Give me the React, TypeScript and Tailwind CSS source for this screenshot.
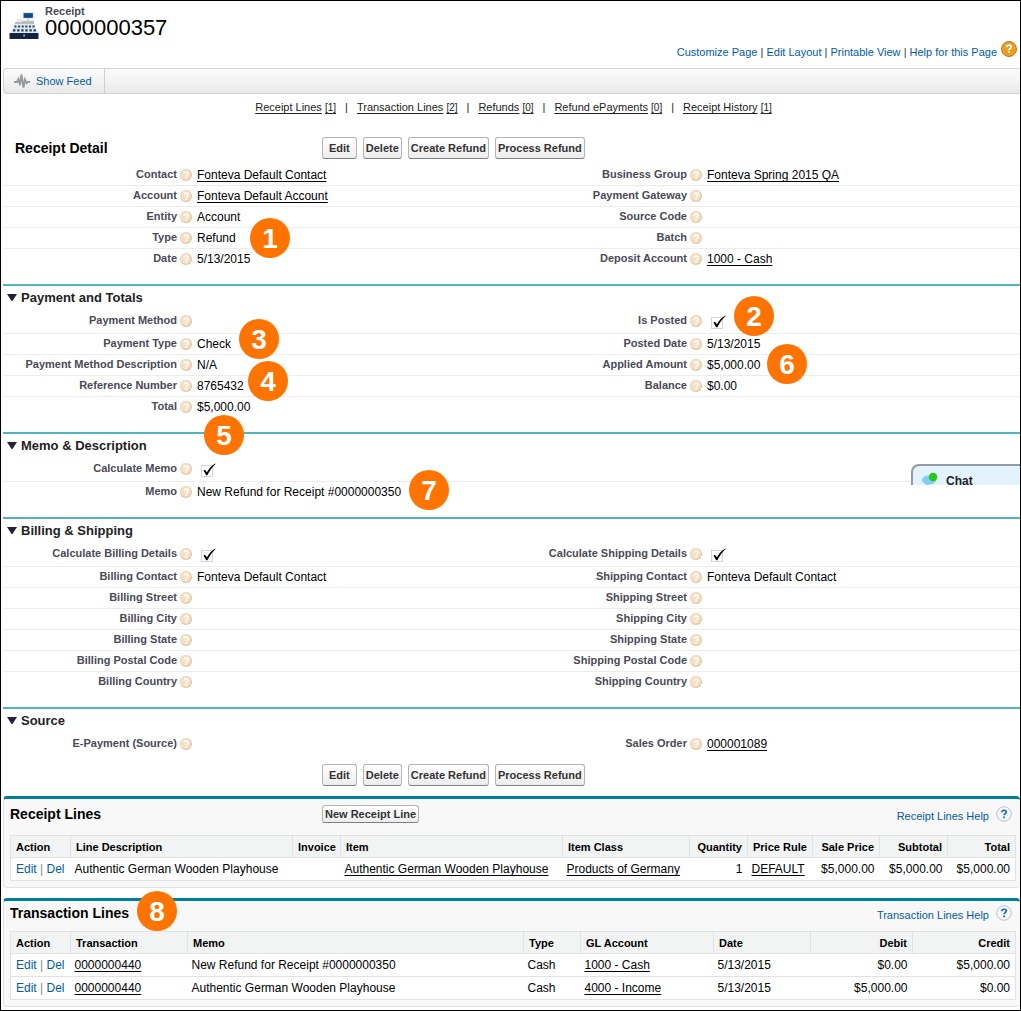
import type { ReactNode } from "react";

const ACTIONS = ["Edit", "Delete", "Create Refund", "Process Refund"];

function A({ children }: { children: ReactNode }) {
  return (
    <a href="#" className="underline underline-offset-2">
      {children}
    </a>
  );
}

function Btn({ children, small }: { children: ReactNode; small?: boolean }) {
  return (
    <button
      type="button"
      className={
        "whitespace-nowrap rounded-[3px] border border-[#b5b5b5] border-b-[#7f7f7f] bg-linear-to-b from-white to-[#ededed] px-[2px] text-[11px] font-bold text-[#333] " +
        (small ? "h-[18px] leading-4" : "h-[22px] leading-5")
      }
    >
      {children}
    </button>
  );
}

function ActionBar() {
  return (
    <div className="flex gap-[6px]">
      {ACTIONS.map((a) => (
        <div key={a} className="flex first:*:px-[6px]">
          <Btn>{a}</Btn>
        </div>
      ))}
    </div>
  );
}

function Hint() {
  return (
    <svg viewBox="0 0 12 12" className="mx-[3px] mt-1 h-3 w-3 shrink-0" aria-hidden="true">
      <circle cx="6" cy="6" r="6" fill="#e2c4a0" />
      <circle cx="5.6" cy="5.4" r="5.3" fill="#f5dfc4" />
      <path d="M4.200 4.800c0-2.300 3.800-2.200 3.800-.1 0 1.300-1.900 1.300-1.900 2.700M6.100 8.300v1.400" fill="none" stroke="#fff" strokeWidth="1.500" />
    </svg>
  );
}

function Check() {
  return (
    <svg viewBox="0 0 16 14" className="mt-1 ml-1 h-[14px] w-4" role="img" aria-label="Checked">
      <rect x=".5" y="2.5" width="11" height="11" fill="#fff" stroke="#aaa" strokeDasharray="1 1" />
      <path d="M2.500 7.600l1.400-.9 2 2.600C8 5.800 10.600 2.600 14.200.6l.3.5C11.300 4.400 8.800 7.600 6.300 12.200H5.200z" fill="#000" />
    </svg>
  );
}

const BADGE =
  "absolute z-10 flex h-10 w-10 items-center justify-center rounded-full bg-[#ff7300] pt-px font-['Liberation_Sans',Arial,sans-serif] text-[28px] leading-10 font-bold text-white";

function Field({ label, children, tall, first }: { label?: string; children?: ReactNode; tall?: boolean; first?: boolean }) {
  return (
    <div className={"flex items-start border-t " + (tall ? "h-[23px] " : "h-[21px] ") + (first ? "border-transparent" : "border-[#ececec]")}>
      {label && (
        <>
          <div className="w-[174px] shrink-0 text-right text-[11px] leading-[19px] font-bold whitespace-nowrap text-[#4a4a56]">{label}</div>
          <Hint />
          <div className="relative ml-[2px] leading-5 whitespace-nowrap">{children}</div>
        </>
      )}
    </div>
  );
}

function Cols({ left, right }: { left: ReactNode; right: ReactNode }) {
  return (
    <div className="grid grid-cols-[510fr_507fr]">
      <div>{left}</div>
      <div>{right}</div>
    </div>
  );
}

function Section({ title, children }: { title: string; children: ReactNode }) {
  return (
    <section className="mt-[15px] border-t-2 border-[#51b5bf]">
      <h3 className="flex h-6 items-center pl-1 text-[13px] font-bold text-[#222]">
        <svg viewBox="0 0 10 8" className="mr-1 mb-[2px] h-2 w-[10px]" aria-hidden="true">
          <path d="M0 1h10L5.500 8h-1z" fill="#23233a" />
        </svg>
        {title}
      </h3>
      {children}
    </section>
  );
}

function Related({ title, help, button, badge, tall, children }: { title: string; help: string; button?: string; badge?: ReactNode; tall?: boolean; children: ReactNode }) {
  return (
    <section className="rounded-[4px] border border-t-[3px] border-r-0 border-[#e0e3e5] border-t-[#007f99] bg-[#f8f8f8] pr-1 pb-[6px] pl-[6px]">
      <div className={"relative flex items-start " + (tall ? "h-9" : "h-[30px]")}>
        <h3 className={"w-[312px] text-sm font-bold " + (tall ? "leading-[31px]" : "leading-6")}>{title}</h3>
        {badge}
        {button && (
          <div className="mt-[6px] flex">
            <Btn small>{button}</Btn>
          </div>
        )}
        <div className={"ml-auto flex items-start pr-1 " + (tall ? "pt-[7px]" : "pt-1")}>
          <a href="#" className="mt-[2px] text-[11px] leading-4 text-[#015ba7]">
            {help}
          </a>
          <svg viewBox="0 0 16 16" className="ml-[7px] h-4 w-4" aria-hidden="true">
            <circle cx="8" cy="8" r="7.300" fill="#f4f6f7" stroke="#bfc3c6" />
            <path d="M5.900 6.300c0-2.800 4.300-2.600 4.300-.2 0 1.500-2.100 1.600-2.100 3.200M8.100 10.500v1.700" fill="none" stroke="#1668b8" strokeWidth="1.700" />
          </svg>
        </div>
      </div>
      {children}
    </section>
  );
}

type Col = { name: string; w: string; right?: boolean };

function Grid({ cols, rows }: { cols: Col[]; rows: ReactNode[][] }) {
  return (
    <table className="w-full table-fixed border-collapse border border-[#e0e3e5] bg-white text-left">
      <thead>
        <tr className="h-[22px] bg-[#f2f3f3] text-[11px]">
          {cols.map((c) => (
            <th key={c.name} className={"border border-[#e0e3e5] px-[5px] pt-[2px] pb-0 font-bold whitespace-nowrap " + c.w + (c.right ? " text-right" : "")}>
              {c.name}
            </th>
          ))}
        </tr>
      </thead>
      <tbody>
        {rows.map((r, i) => (
          <tr key={i} className="h-[23px] border-b border-[#e0e3e5]">
            {r.map((cell, j) => (
              <td key={j} className={"py-0 pr-[5px] pl-1 whitespace-nowrap" + (cols[j].right ? " text-right" : "")}>
                {cell}
              </td>
            ))}
          </tr>
        ))}
      </tbody>
    </table>
  );
}

const editDel = (
  <span className="pl-px text-[#015ba7]">
    <a href="#">Edit</a> <span className="text-[#888]">|</span> <a href="#">Del</a>
  </span>
);

const receiptCols: Col[] = [
  { name: "Action", w: "w-[60px]" },
  { name: "Line Description", w: "" },
  { name: "Invoice", w: "w-[48px]" },
  { name: "Item", w: "w-[222px]" },
  { name: "Item Class", w: "w-[127px]" },
  { name: "Quantity", w: "w-[58px]", right: true },
  { name: "Price Rule", w: "w-[65px]" },
  { name: "Sale Price", w: "w-[67px]", right: true },
  { name: "Subtotal", w: "w-[68px]", right: true },
  { name: "Total", w: "w-[68px]", right: true },
];

const transactionCols: Col[] = [
  { name: "Action", w: "w-[60px]" },
  { name: "Transaction", w: "w-[117px]" },
  { name: "Memo", w: "" },
  { name: "Type", w: "w-[57px]" },
  { name: "GL Account", w: "w-[133px]" },
  { name: "Date", w: "w-[97px]" },
  { name: "Debit", w: "w-[102px]", right: true },
  { name: "Credit", w: "w-[103px]", right: true },
];

const lists: [string, number][] = [
  ["Receipt Lines", 1],
  ["Transaction Lines", 2],
  ["Refunds", 0],
  ["Refund ePayments", 0],
  ["Receipt History", 1],
];

export default function App() {
  return (
    <div className="border border-black bg-white pb-[3px] pl-[2px] font-['Liberation_Sans',Arial,sans-serif] text-xs text-black">
      <header className="flex h-[67px] items-start justify-between">
        <div className="flex items-start pl-[6px]">
          <svg viewBox="0 0 30 28" className="mt-[11px] h-7 w-[30px]" aria-hidden="true">
            <rect x="14.500" y="1" width="9.500" height="5" fill="#0b4a86" stroke="#8fa9c4" strokeWidth=".5" />
            <path d="M18.500 6h1.500v3h-1.500z" fill="#c9ced2" />
            <path d="M7.500 7h6v4h-6z" fill="#e6e8ea" />
            <path d="M6 10h7V8.700h12V12H6z" fill="#b9bdc2" />
            <path d="M5 12h20.500L29 21H1z" fill="#e3e8ed" />
            <path d="M5.500 14.500h20" stroke="#21456f" strokeWidth="2" strokeDasharray="2 1.600" />
            <path d="M4 18.300h23" stroke="#21456f" strokeWidth="2.200" strokeDasharray="2.400 1.700" />
            <path d="M.500 21h29v5.500q0 .5-.5.5H1q-.5 0-.5-.5z" fill="#12233f" />
            <rect x="14.500" y="22.500" width="1.200" height="2" fill="#d8dfe8" />
          </svg>
          <div className="pl-[6px]">
            <p className="mt-1 text-[11px] leading-3 font-bold text-[#4a4a56]">Receipt</p>
            <h1 className="text-[22px] leading-[22px]">0000000357</h1>
          </div>
        </div>
        <nav className="mt-10 flex items-start pr-[3px] text-[11px] whitespace-nowrap text-[#015ba7]">
          <div className="mt-[3px] leading-4">
            <a href="#">Customize Page</a> <span className="text-[#333]">|</span> <a href="#">Edit Layout</a> <span className="text-[#333]">|</span>{" "}
            <a href="#">Printable View</a> <span className="text-[#333]">|</span> <a href="#">Help for this Page</a>
          </div>
          <svg viewBox="0 0 16 16" className="ml-1 h-4 w-4" aria-hidden="true">
            <circle cx="8" cy="8" r="7.500" fill="#ee9d20" stroke="#b97a1c" />
            <path d="M5.700 6.200c0-2.800 4.500-2.600 4.500-.2 0 1.500-2.200 1.600-2.200 3.200M8 10.300v1.800" fill="none" stroke="#fff" strokeWidth="1.700" />
          </svg>
        </nav>
      </header>

      <div className="flex h-[26px] rounded-l-[4px] border border-r-0 border-[#d4d4d4] bg-linear-to-b from-[#fcfcfc] to-[#e9e9e9]">
        <a href="#" className="flex items-center border-r border-[#cfcfcf] pr-3 pl-[10px] text-[11px] text-[#015ba7]">
          <svg viewBox="0 0 16 16" className="mr-[6px] h-4 w-4" aria-hidden="true">
            <path d="M0 9h3l1.500-3L6 12 7.500 1.500l2 13L11 6.500l1.500 3.500 1-1H16" fill="none" stroke="#969a9e" strokeWidth="1.900" />
          </svg>
          Show Feed
        </a>
      </div>

      <nav className="flex h-[43px] items-start justify-center pt-[5px] pl-1 text-[11px] leading-4 whitespace-nowrap text-[#222]">
        {lists.map(([name, n], i) => (
          <span key={name}>
            {i > 0 && <span className="mx-[9px]">|</span>}
            <A>{name}</A>{" "}
            <a href="#" className="text-[10px] underline underline-offset-2">
              [{n}]
            </a>
          </span>
        ))}
      </nav>

      <div className="flex h-[27px] items-start">
        <h2 className="w-[319px] pl-3 text-sm leading-[22px] font-bold">Receipt Detail</h2>
        <ActionBar />
      </div>
      <Cols
        left={
          <>
            <Field label="Contact" first><A>Fonteva Default Contact</A></Field>
            <Field label="Account"><A>Fonteva Default Account</A></Field>
            <Field label="Entity">Account</Field>
            <Field label="Type">
              Refund<span className={BADGE + " -top-[10px] left-[53px]"}>1</span>
            </Field>
            <Field label="Date">5/13/2015</Field>
          </>
        }
        right={
          <>
            <Field label="Business Group" first><A>Fonteva Spring 2015 QA</A></Field>
            <Field label="Payment Gateway" />
            <Field label="Source Code" />
            <Field label="Batch" />
            <Field label="Deposit Account"><A>1000 - Cash</A></Field>
          </>
        }
      />

      <Section title="Payment and Totals">
        <Cols
          left={
            <>
              <Field label="Payment Method" tall first />
              <Field label="Payment Type">
                Check<span className={BADGE + " -top-[15px] left-[42px]"}>3</span>
              </Field>
              <Field label="Payment Method Description">N/A</Field>
              <Field label="Reference Number">
                8765432<span className={BADGE + " -top-[15px] left-[51px]"}>4</span>
              </Field>
              <Field label="Total">
                $5,000.00<span className={BADGE + " top-[18px] left-[7px]"}>5</span>
              </Field>
            </>
          }
          right={
            <>
              <Field label="Is Posted" tall first>
                <Check />
                <span className={BADGE + " -top-[15px] left-[27px]"}>2</span>
              </Field>
              <Field label="Posted Date">5/13/2015</Field>
              <Field label="Applied Amount">
                $5,000.00<span className={BADGE + " -top-[11px] left-[60px]"}>6</span>
              </Field>
              <Field label="Balance">$0.00</Field>
              <Field />
            </>
          }
        />
      </Section>

      <Section title="Memo & Description">
        <div className="relative">
          <Field label="Calculate Memo" tall first><Check /></Field>
          <Field label="Memo">
            New Refund for Receipt #0000000350<span className={BADGE + " -top-[12px] left-[212px]"}>7</span>
          </Field>
          <button
            type="button"
            className="absolute top-[6px] right-0 flex h-[21px] w-[109px] items-start rounded-tl-[8px] border-t-2 border-l-2 border-[#929ba3] bg-[#e2f2fe] pl-[9px] text-left text-xs font-bold text-[#222]"
          >
            <svg viewBox="0 0 16 13" className="mt-[6px] mr-2 h-[13px] w-4" aria-hidden="true">
              <ellipse cx="7" cy="8" rx="7" ry="4.500" fill="#7fcdf0" />
              <path d="M3 10l1 3 4-1z" fill="#7fcdf0" />
              <circle cx="11" cy="5" r="4.300" fill="#27c71c" />
            </svg>
            <span className="mt-[11px] leading-[8px]">Chat</span>
          </button>
        </div>
      </Section>

      <Section title="Billing & Shipping">
        <Cols
          left={
            <>
              <Field label="Calculate Billing Details" tall first><Check /></Field>
              <Field label="Billing Contact">Fonteva Default Contact</Field>
              <Field label="Billing Street" />
              <Field label="Billing City" />
              <Field label="Billing State" />
              <Field label="Billing Postal Code" />
              <Field label="Billing Country" />
            </>
          }
          right={
            <>
              <Field label="Calculate Shipping Details" tall first><Check /></Field>
              <Field label="Shipping Contact">Fonteva Default Contact</Field>
              <Field label="Shipping Street" />
              <Field label="Shipping City" />
              <Field label="Shipping State" />
              <Field label="Shipping Postal Code" />
              <Field label="Shipping Country" />
            </>
          }
        />
      </Section>

      <Section title="Source">
        <Cols left={<Field label="E-Payment (Source)" first />} right={<Field label="Sales Order" first><A>000001089</A></Field>} />
      </Section>

      <div className="mt-[10px] mb-[10px] pl-[319px]">
        <ActionBar />
      </div>

      <Related title="Receipt Lines" help="Receipt Lines Help" button="New Receipt Line" tall>
        <Grid
          cols={receiptCols}
          rows={[
            [
              editDel,
              "Authentic German Wooden Playhouse",
              "",
              <A>Authentic German Wooden Playhouse</A>,
              <A>Products of Germany</A>,
              "1",
              <A>DEFAULT</A>,
              "$5,000.00",
              "$5,000.00",
              "$5,000.00",
            ],
          ]}
        />
      </Related>
      <div className="h-[10px]" />
      <Related title="Transaction Lines" help="Transaction Lines Help" badge={<span className={BADGE + " -top-[10px] left-[127px]"}>8</span>}>
        <Grid
          cols={transactionCols}
          rows={[
            [editDel, <A>0000000440</A>, "New Refund for Receipt #0000000350", "Cash", <A>1000 - Cash</A>, "5/13/2015", "$0.00", "$5,000.00"],
            [editDel, <A>0000000440</A>, "Authentic German Wooden Playhouse", "Cash", <A>4000 - Income</A>, "5/13/2015", "$5,000.00", "$0.00"],
          ]}
        />
      </Related>
    </div>
  );
}
